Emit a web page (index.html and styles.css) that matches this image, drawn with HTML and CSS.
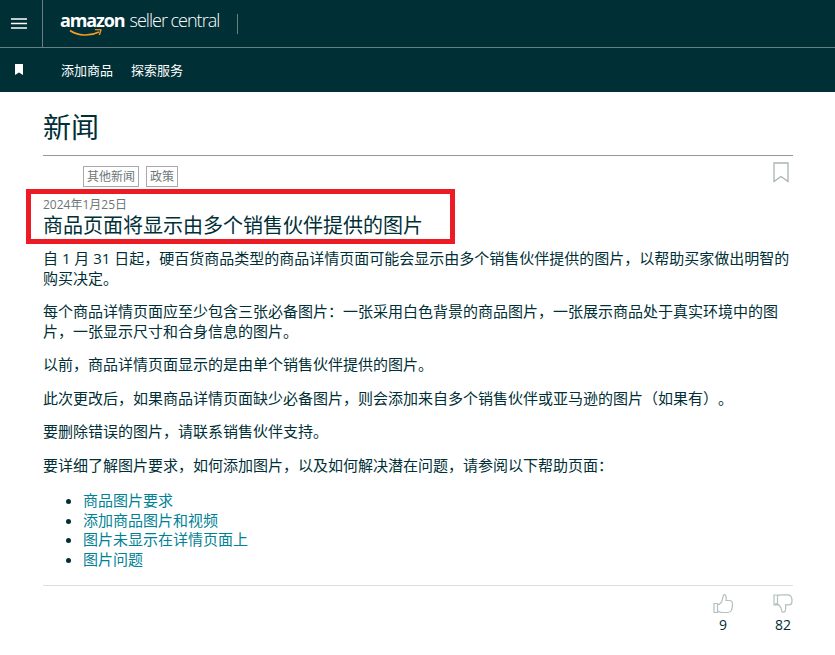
FILE: index.html
```html
<!DOCTYPE html>
<html lang="zh-CN">
<head>
<meta charset="utf-8">
<title>新闻</title>
<link rel="stylesheet" href="styles.css">
</head>
<body>
<header class="topbar">
  <div class="toprow">
    <button class="menu" aria-label="菜单">
      <svg width="16" height="11" viewBox="0 0 16 11"><path d="M0 1h16M0 5.500h16M0 10h16" stroke="#fff" stroke-width="1.600" fill="none"/></svg>
    </button>
    <div class="brand">
      <span class="logo"><span class="logo-word">amazon</span><span class="logo-rest">seller central</span>
        <svg class="smile" width="34" height="10" viewBox="0 0 34 10"><path d="M1 2.500C9 8 21 8.500 30 4" stroke="#f59a23" stroke-width="1.600" fill="none"/><path d="M26 1.600 L32 1.800 L30.400 7" stroke="#f59a23" stroke-width="1.300" fill="none"/></svg>
      </span>
      <span class="brand-sep"></span>
    </div>
  </div>
  <nav class="navrow">
    <span class="nav-mark"><svg width="8" height="11" viewBox="0 0 8 11"><path d="M0 0h8v11L4 8.500 0 11z" fill="#fff"/></svg></span>
    <a class="nav-link">添加商品</a>
    <a class="nav-link">探索服务</a>
  </nav>
</header>
<main class="page">
  <h1 class="page-title">新闻</h1>
  <article class="article">
    <div class="tagrow">
      <span class="tag">其他新闻</span>
      <span class="tag">政策</span>
      <svg class="bookmark" width="16" height="21" viewBox="0 0 16 21"><path d="M1 1h14v18.500L8 14.500 1 19.500z" fill="none" stroke="#a9b4b4" stroke-width="1.300"/></svg>
    </div>
    <div class="headline">
      <div class="date">2024年1月25日</div>
      <h2 class="article-title">商品页面将显示由多个销售伙伴提供的图片</h2>
      <div class="highlight"></div>
    </div>
    <div class="content">
      <p>自 1 月 31 日起，硬百货商品类型的商品详情页面可能会显示由多个销售伙伴提供的图片，以帮助买家做出明智的购买决定。</p>
      <p>每个商品详情页面应至少包含三张必备图片：一张采用白色背景的商品图片，一张展示商品处于真实环境中的图片，一张显示尺寸和合身信息的图片。</p>
      <p>以前，商品详情页面显示的是由单个销售伙伴提供的图片。</p>
      <p>此次更改后，如果商品详情页面缺少必备图片，则会添加来自多个销售伙伴或亚马逊的图片（如果有）。</p>
      <p>要删除错误的图片，请联系销售伙伴支持。</p>
      <p>要详细了解图片要求，如何添加图片，以及如何解决潜在问题，请参阅以下帮助页面：</p>
      <ul class="links">
        <li><a>商品图片要求</a></li>
        <li><a>添加商品图片和视频</a></li>
        <li><a>图片未显示在详情页面上</a></li>
        <li><a>图片问题</a></li>
      </ul>
    </div>
    <footer class="votes">
      <div class="vote">
        <svg width="20" height="20" viewBox="0 0 20 20"><path d="M1 9.500h3.500v9H1z M4.500 10.500h1.500c2-1 3-3 3.500-5 .3-2 .3-4 1.700-5 1.800.3 2.300 3 1.800 6h3.500c2 0 3 1.500 3 4 0 3-.5 5-1.500 6.500-.8 1-2 1.500-3.500 1.500H9c-1.500 0-3-.6-4.500-1.500" fill="none" stroke="#b4bfbf" stroke-width="1.200"/></svg>
        <span>9</span>
      </div>
      <div class="vote">
        <svg width="20" height="20" viewBox="0 0 20 20"><path d="M1 1h3.500v10H1z M4.500 1.500C6 1 7 .8 8.500.8h6c2 0 3 .7 3.700 2 .7 1.200.8 3 .8 5 0 2-1.200 3-3 3h-3.500c.5 3 .2 5.500-.8 6.700-1 1-2.200 1-2.700 0-.5-2.500-1-4.500-2.500-6-1-1-1.500-1.500-2.500-1.700h-2" fill="none" stroke="#b4bfbf" stroke-width="1.200"/></svg>
        <span>82</span>
      </div>
    </footer>
  </article>
</main>
</body>
</html>
```
FILE: styles.css
```css
* { box-sizing: border-box; }
html, body { margin: 0; padding: 0; }
body {
  font-family: "Open Sans", "Noto Sans CJK SC", sans-serif;
  color: #002f36;
  background: #fff;
  font-size: 15px;
  height: 655px;
  overflow: hidden;
  text-spacing-trim: space-all;
}
.topbar { background: #002f36; color: #fff; height: 92px; }
.toprow {
  display: flex;
  height: 48px;
  border-bottom: 1px solid #6c7e81;
}
.menu {
  width: 43px;
  border: 0;
  border-right: 1px solid #6c7e81;
  background: none;
  padding: 0 5px 0 0;
  display: flex;
  align-items: center;
  justify-content: center;
}
.brand { display: flex; align-items: center; padding-left: 17px; }
.logo { position: relative; display: flex; align-items: baseline; height: 32px; color: #fff; padding-top: 0; }
.logo-word { font-family: "Open Sans", sans-serif; font-weight: 700; font-size: 18px; letter-spacing: -1.100px; }
.logo-rest { font-family: "Open Sans", sans-serif; font-size: 18px; letter-spacing: -1px; margin-left: 5px; font-weight: 300; }
.smile { position: absolute; left: 9px; top: 20px; }
.brand-sep { width: 1px; height: 20px; background: #6c7e81; margin-left: 18px; }
.navrow { display: flex; align-items: center; height: 44px; padding-bottom: 2px; }
.nav-mark { width: 61px; padding-left: 15px; display: flex; align-items: center; }
.nav-link { color: #fff; font-size: 13px; margin-right: 18px; }
.page { padding: 0 42px 0 43px; }
.page-title {
  margin: 0;
  height: 64px;
  font-size: 28px;
  font-weight: 400;
  line-height: 70px;
  border-bottom: 1px solid #999;
}
.tagrow { position: relative; display: flex; gap: 7px; padding: 10px 0 0 40px; height: 32px; }
.tag {
  border: 1px solid #a9a9a9;
  font-size: 12px;
  line-height: 19px;
  height: 21px;
  padding: 0 3px;
  color: #6c7778;
}
.bookmark { position: absolute; right: 4px; top: 6px; }
.headline { position: relative; padding-top: 9px; }
.date { font-size: 12px; line-height: 16px; color: #6c7778; }
.article-title { margin: 0; font-size: 20px; font-weight: 400; line-height: 26px; }
.highlight {
  position: absolute;
  left: -17px;
  top: 1px;
  width: 429px;
  height: 55px;
  border: 5px solid #ed1c24;
}
.content { padding-top: 10px; }
.content p { margin: 0 0 14px; line-height: 19.500px; }
.links { margin: 16px 0 0; padding-left: 40px; line-height: 19.500px; }
.links a { color: #008296; }
.votes {
  margin-top: 16px;
  border-top: 1px solid #ddd;
  display: flex;
  justify-content: flex-end;
  gap: 40px;
  padding-top: 8px;
}
.vote { display: flex; flex-direction: column; align-items: center; width: 20px; font-size: 14px; line-height: 19px; gap: 1px; }
```
